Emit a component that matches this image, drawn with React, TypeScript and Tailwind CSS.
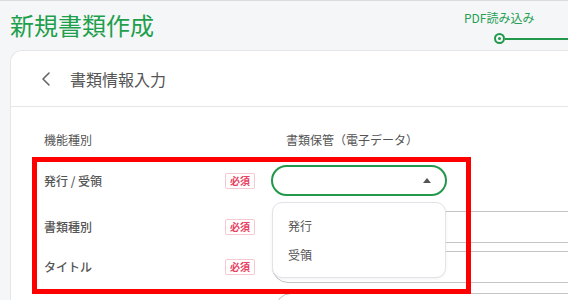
import { ChevronLeft } from 'lucide-react';

const FONT = { fontFamily: '"Noto Sans CJK JP", "Noto Sans", sans-serif' };

function Badge() {
  return (
    <span className="flex h-[16px] w-[30px] items-center justify-center rounded-[2px] border border-[#f6c9d0] text-[10px] font-bold leading-none text-[#e8415f]">
      必須
    </span>
  );
}

function Label({ text }: { text: string }) {
  return (
    <div className="flex w-[211px] shrink-0 items-center justify-between">
      <span className="text-[12px] font-medium text-[#555]">{text}</span>
      <Badge />
    </div>
  );
}

export default function App() {
  return (
    <div
      className="relative h-[300px] w-[568px] overflow-hidden border-t border-[#dcdcdc] bg-[#f5f6f8]"
      style={FONT}
    >
      {/* header */}
      <div className="flex h-[49px] items-start justify-between">
        <h1 className="ml-[10px] mt-[8px] text-[24px] font-normal leading-[32px] text-[#1e9f4b]">新規書類作成</h1>
        <div className="mt-[9px] flex w-[104px] flex-col">
          <span className="text-[12px] leading-[16px] text-[#27a055]">PDF読み込み</span>
          <div className="mt-[7px] flex items-center pl-[30px]">
            <span className="flex h-[11px] w-[11px] items-center justify-center rounded-full border-2 border-[#22994a]">
              <span className="h-[3px] w-[3px] rounded-full bg-[#22994a]" />
            </span>
            <span className="h-[2px] flex-1 bg-[#22994a]" />
          </div>
        </div>
      </div>

      {/* card */}
      <div className="ml-[10px] w-[600px] rounded-tl-[12px] border-l border-t border-[#e6e6e6] bg-white">
        <div className="flex h-[56px] items-center border-b border-[#e6e6e6] pl-[23px]">
          <ChevronLeft size={24} strokeWidth={1.6} className="text-[#666]" />
          <span className="ml-[12px] text-[16px] text-[#555]">書類情報入力</span>
        </div>

        <div className="pl-[33px] pt-[24px]">
          <div className="flex text-[12px] leading-[18px] text-[#555]">
            <span className="w-[242px]">機能種別</span>
            <span>書類保管（電子データ）</span>
          </div>

          {/* row 1 */}
          <div className="mt-[16px] flex items-center gap-[16px]">
            <Label text="発行 / 受領" />
            <div className="relative">
              <div className="flex h-[31px] w-[176px] items-center justify-end rounded-full border-2 border-[#22994a] pr-[14px]">
                <span className="h-0 w-0 border-x-[4px] border-b-[5px] border-x-transparent border-b-[#555]" />
              </div>
              <div className="absolute left-[1px] top-[37px] z-10 flex h-[76px] w-[174px] flex-col justify-center gap-[11px] rounded-[10px] border border-[#e2e2e8] bg-white pl-[15px] text-[12px] leading-[18px] text-[#555] shadow-[0_1px_3px_rgba(0,0,0,0.06)]">
                <span>発行</span>
                <span>受領</span>
              </div>
            </div>
          </div>

          {/* row 2 */}
          <div className="mt-[15px] flex items-center gap-[17px]">
            <Label text="書類種別" />
            <div className="h-[32px] w-[400px] shrink-0 rounded-full border border-[#c4c4c4]" />
          </div>

          {/* row 3 */}
          <div className="mt-[8px] flex items-center gap-[17px]">
            <Label text="タイトル" />
            <div className="h-[32px] w-[400px] shrink-0 rounded-full border border-[#c4c4c4]" />
          </div>

          {/* row 4 */}
          <div className="mt-[10px] flex items-center gap-[20px]">
            <div className="w-[211px] shrink-0" />
            <div className="h-[32px] w-[400px] shrink-0 rounded-full border border-[#c4c4c4]" />
          </div>
        </div>
      </div>

      {/* annotation */}
      <div className="pointer-events-none absolute left-[32px] top-[156px] z-20 h-[137px] w-[439px] border-[5px] border-[#ff0000]" />
    </div>
  );
}
